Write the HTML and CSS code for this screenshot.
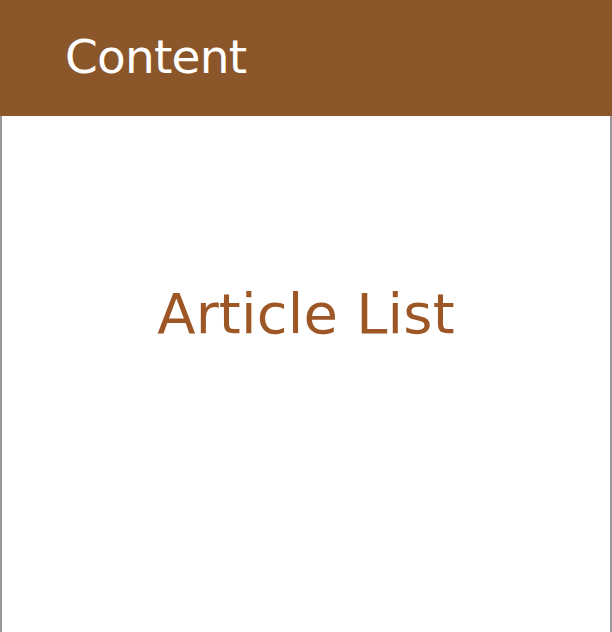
FILE: index.html
```html
<!DOCTYPE html>
<html>
<head>
<meta charset="utf-8">
<link rel="stylesheet" href="styles.css">
</head>
<body>
<header class="topbar"><h1 class="title">Content</h1></header>
<main class="content"><p class="label">Article List</p></main>
</body>
</html>
```
FILE: styles.css
```css
html, body { margin: 0; padding: 0; height: 100%; }
body {
  font-family: "DejaVu Sans", "Liberation Sans", sans-serif;
  display: flex;
  flex-direction: column;
  background: #fff;
}
.topbar {
  box-sizing: border-box;
  height: 116px;
  background: #8b572a;
  padding: 33px 0 0 65px;
  flex: none;
}
.title {
  margin: 0;
  font-weight: normal;
  font-size: 47px;
  line-height: 1;
  letter-spacing: -0.8px;
  color: #fff;
}
.content {
  flex: 1;
  box-sizing: border-box;
  border-left: 2px solid #999;
  border-right: 2px solid #999;
  padding-top: 170px;
}
.label {
  margin: 0;
  text-align: center;
  font-size: 56px;
  line-height: 1;
  letter-spacing: 0.2px;
  color: #9d5727;
}
```
